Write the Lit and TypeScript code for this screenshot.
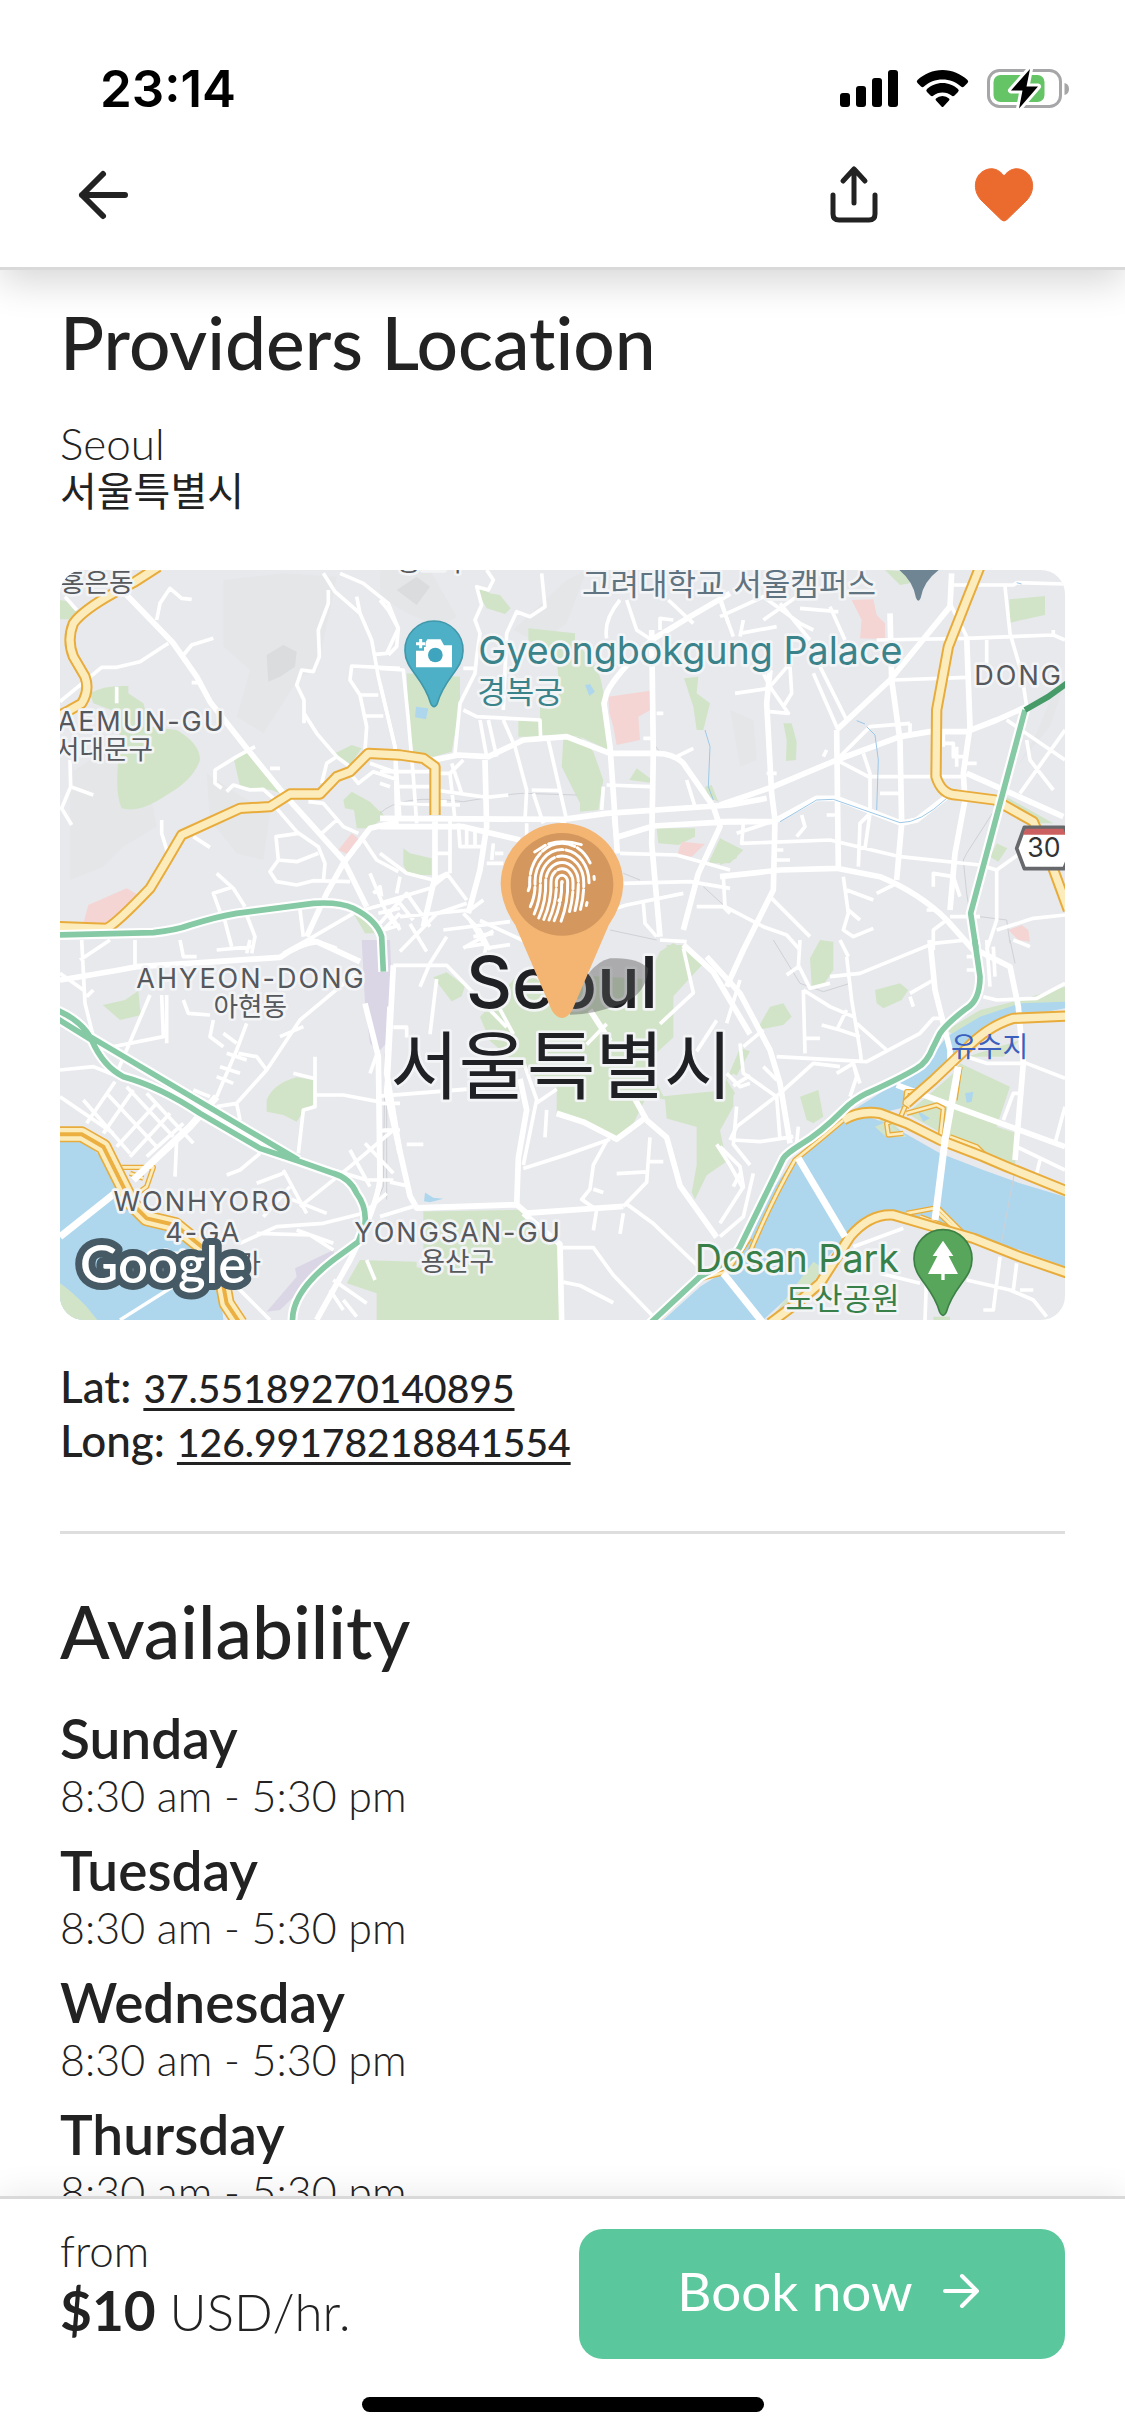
import { LitElement, html, svg, css } from "lit";
import { customElement, property, state } from "lit/decorators.js";

/* The map is drawn in six tiles; every tile has its own origin on the map canvas. */
type Tile = "nw" | "n" | "ne" | "sw" | "s" | "se";
const ORIGIN: Record<Tile, string> = {
  nw: "translate(-30 -30)",
  n: "translate(960 -30)",
  ne: "translate(1980 -30)",
  sw: "translate(-30 1110)",
  s: "translate(960 690) scale(1 1.033)",
  se: "translate(1980 1110)",
};
type Layer = Partial<Record<Tile, string>>;

const hills: Layer = {
  nw: "M520 60L700 40 860 50 830 200 800 330 750 350 640 520 560 470 600 330 520 260ZM60 640L180 560 300 700 320 800 220 860 160 920 60 960ZM470 640L560 700 660 760 640 900 560 880 480 780Z",
  n: "M0 30H150L230 170 180 200 80 160 0 110ZM400 210L560 60 620 30 560 190 480 250Z",
  ne: "M30 450L100 480 110 600 60 620ZM940 540L1000 400 1030 380 990 500 890 620Z",
};
const hillShade: Layer = {
  nw: "M650 285L700 255 740 275 735 320 690 350 655 365Z",
  n: "M50 90L110 50 150 80 110 135Z",
};

const parks: Layer = {
  nw: "M30 120L60 125 80 155 60 178 30 178ZM120 400Q160 375 235 378V400L280 430 300 500 380 510Q450 550 450 600 430 660 350 705 270 760 215 745 195 700 205 600L210 460 130 430ZM552 600L585 570 700 705 665 690Q600 685 570 678ZM855 580L905 555 935 565 900 615 855 595ZM880 720L905 695 960 725 1005 770 960 805H920L912 750 885 745ZM910 1060L950 1080 975 1120 945 1120Z",
  n: "M80 340L240 350V430L215 575 160 590 100 580 85 470ZM285 85L300 80 330 100 360 105 392 145 375 162 320 145ZM445 205L585 220V250Q650 300 665 370L680 450 685 570 600 530 480 525V440L540 400 530 300 445 240ZM550 535L600 530 640 575 670 660 655 750 600 755V730L545 620ZM415 478H480V530H415ZM70 865L90 880 155 895V945H85L70 915ZM912 355L955 350 950 400 990 430 970 510H950L940 440ZM975 680L995 675 1015 725 985 710ZM830 805H945V830L895 855 835 850ZM985 910L1020 835 1090 870 1050 910ZM748 660L770 625 810 655V668ZM0 750L15 770 0 785ZM860 1155H910V1180H860Z",
  ne: "M495 30L565 35 570 70 540 75ZM868 118L975 108V165L870 188ZM190 490H215L230 545 228 600 198 603 200 540ZM0 835L50 865V895L0 915ZM810 890L830 850 862 865 835 905ZM840 700L1000 790H940L850 740Z",
  sw: "M158 195L225 180 265 152 270 205 275 225 210 240ZM650 480Q670 430 740 412L790 420 795 490 760 515 740 545 700 525 650 515ZM890 1030L930 960 1100 965V1140H980V1060Z",
  s: "M160 515L200 500 255 540 245 570 215 585ZM300 630L420 500 800 520 840 440 880 415 975 470 880 570V690L800 760 850 860 1060 840V890L1020 960 1040 1050 980 1090 945 1160 935 1140 950 1060V950L860 925 855 870 800 860 760 940 715 980 680 970 530 910V830L440 790 330 700ZM1050 790L1080 720 1110 730 1070 800ZM130 1195L430 1190 530 1280 540 1510H0V1340L130 1360Z",
  se: "M780 210L900 180 1035 140V190H900L700 285 680 270ZM740 350L900 300 850 350ZM720 370L870 440 830 560 890 580 885 690 780 650 700 600 560 520 620 470 700 400ZM465 550L500 530 560 590H500ZM270 55L300 0 340 5V90L310 135 275 140ZM465 150L540 130 565 150 545 180 490 205 470 190ZM110 270L150 200 190 190 215 230 190 255 140 265ZM0 460L60 330 70 370 20 420 45 460 0 520ZM240 470L295 450 310 530 280 550 260 540ZM0 640L20 665 0 668ZM640 1130H690V1145H640Z",
};
const hospitals: Layer = {
  nw: "M100 1090L115 1035 230 985 265 1005 170 1095ZM865 870L905 820 930 840 892 882Z",
  n: "M685 410L810 392 812 450 775 470 780 540 710 555 700 500 688 460ZM890 890L905 845 975 852 935 890Z",
  ne: "M395 120L460 118 470 165 495 190V238L420 235 425 180ZM865 1110L905 1095 925 1110 930 1145 895 1140Z",
};
const stations: Layer = {
  sw: "M935 0H1020L1028 200 1010 310 985 335 960 310 945 190ZM735 985L850 930 855 950 690 1110 650 1115 740 1010Z",
};
const water: Layer = {
  n: "M108 440L145 445 138 478 105 472ZM615 375L630 372 645 395 628 408Z",
  sw: "M30 600H90Q150 630 180 700L240 800 350 860 440 920 510 1030 520 1140H30Z",
  s: "M135 1140L160 1155 190 1158 150 1168 132 1165Z",
  se: "M400 530Q440 520 520 560L660 640 790 690 900 730 1035 770V980L900 930 700 880 640 850 480 820Q410 850 370 900L270 1010 130 1140H-170L-60 1040 20 990 80 920 150 760 220 660 370 540ZM400 510L510 440 620 370 680 290 780 230 900 190 1035 185V205L880 235Q800 260 740 320L560 500 480 520ZM735 460L760 455 755 485 740 488ZM590 510L630 535 610 545Z",
};
const banks: Layer = {
  sw: "M30 1030Q60 1050 110 1100L150 1150H30Z",
  se: "M150 1140L280 965 310 985 220 1110ZM465 560L500 545 560 590 500 592Z",
};

const avenues: Layer = {
  nw: "M225 100L370 250 440 350 480 425 590 565 700 700 880 900 950 1040M1045 785L960 805 880 910 830 1000 770 1130",
  n: "M0 775L550 778 680 760 1050 735 1160 715M0 800H250L420 840M815 210L820 580 815 850 840 1130M1050 100L930 170 815 240Q700 350 680 400L672 430 690 560 700 700 712 880M160 600L235 585 325 590 430 540 560 530 690 580H830Q880 580 910 610L1000 740 1020 800 955 940 910 1110M715 830L820 798 1050 785H1100M315 600L320 800 300 930 265 1060M165 770V950L130 1100M550 778V800",
  ne: "M0 735L160 680 350 600 540 530 630 515H740L830 480 920 440M0 785H160L290 715H350L545 790 590 780 680 710M350 510L510 360 690 140 695 40M350 510L355 920M150 330L140 430 155 700 165 780 160 990 70 1170 20 1280M740 230L750 500 730 640 735 720 705 880 690 1050M0 950L180 930 350 925 480 950Q600 1000 680 1080L760 1170M740 640L830 680 1030 770M510 160L515 360 540 540 545 790 530 960",
  sw: "M945 190L985 350 990 720Q980 800 900 960L800 1140M1020 200L1010 400 1050 640M30 120Q180 95 260 80L420 70 690 52Q750 10 800 5L930 65",
  s: "M40 480L20 850 90 1150 110 1185 410 1175 440 1200 730 1180M410 1180L415 1040 440 900 420 810M800 930L860 980 900 1120 1010 1270M630 610L690 700M760 860L800 930M910 420L1000 500 1110 680M530 910L610 935 710 985 800 920M430 1200L540 1290 545 1510",
  se: "M-40 50L60 160 150 330 180 430 210 610M530 435L760 520 1035 620M630 0L645 150 690 330V380M770 30L870 80 895 200 910 370 885 660",
};
const streets: Layer = {
  nw: "M320 180L330 130 360 85 395 115 425 118M400 285L425 255 490 235M355 250L270 305 200 322H155L30 425M820 40L855 95 930 160 965 240 985 350 1035 560 1040 790M870 40L940 70 1015 130 1045 205 1010 280 975 283M835 90V130L805 210 808 290 790 335 755 330 740 375 762 420V490M762 460L800 520 860 590 900 620M1050 325L905 318 900 360 930 405 950 500 945 570M930 405H985M940 468H1000M920 110L930 160M425 368H445M615 560L560 590 495 630V670L515 685M530 695L550 675 600 690 640 688 670 715M860 590L830 610 815 670M660 625H690M60 600L62 680 35 745 65 795M62 680L130 705M335 780V820L355 885M430 830L480 862M680 745L740 815 805 860 825 910 820 965M745 820L678 830 685 900 660 935 680 965 740 975 790 962 900 965M685 900L740 905 805 880M775 725L820 730 880 800 925 820M860 780L815 820M940 840L980 900 1045 935M500 940L550 985 585 1040M550 980L490 1000 510 1055M520 1065L545 1160M590 1065L615 1130 605 1180M900 640L925 670 970 635 1045 660M960 610L1045 640M940 1050L1050 1020M970 1000L990 980 995 1010M910 1060L790 1130 700 1180M985 1060L1050 1045M1000 1110L1050 1095M750 1050L760 1130M200 380V430M45 110L80 150M700 1180L790 1140 860 1165M960 940L1010 1060 1040 1100",
  n: "M0 120L25 150 55 205 50 260 25 285M0 325L70 330 85 480 100 650 110 790M0 370L45 560 60 780M250 325H290M290 290L285 340 240 430 225 580M290 290L300 220 285 180 305 135 290 80 325 90 340 60 320 30M485 40L495 140 450 170 410 155 380 220 370 450M720 120Q670 180 680 235M740 120L770 210 815 240M865 120L940 190M880 180L840 175V210M1020 110L1045 190M250 450L290 470 480 480 482 540M300 480L320 590M370 480L405 560 440 690 435 780M325 480L350 590M505 540L560 780M455 690L545 692M460 700L490 790M0 635H160M45 680H155M50 730L240 735M170 640H210L250 600M210 640L225 780M165 690L320 712 385 705M0 670L30 680M215 610L245 700M165 725H200M680 675L810 680M670 680L665 750M700 770L712 880M790 535H815M830 460H850M940 565L890 590M920 660L945 740M720 880L890 885 1050 930M730 970L930 965 1050 985M910 1000L740 1035 590 1080M790 1030L795 1090 830 1130M950 1040H1030L1050 1060M840 1140L920 1145M0 880L80 940 160 960 200 940 260 1020M0 1030L150 985 200 945M210 780V940M160 880H210M235 790L240 860H310M260 800V860M285 810V860M0 1090L80 1000 150 1100M60 1070L270 1050 310 1020M190 1110L390 1085M250 1060L300 1110 330 1170M60 950L50 1000M320 910H370M30 1060L60 1110M60 1030L100 1080M0 1120L60 1060M340 850L335 900M345 880H370M440 790V830M280 1130L340 1120M200 1130L150 1210 120 1280M260 1160L320 1150 310 1200",
  ne: "M470 240L740 235 1000 225 1035 240M700 75H880L890 68 1035 72M855 80L870 220 905 340 920 440M690 130L740 230M800 240V310M520 360L740 352M280 340L350 500M300 320L380 480M0 170L130 110 240 190 280 210M130 180L230 110M0 120L40 230M240 145L355 155M330 140L375 240M70 180L60 230M60 220L170 200M180 130L270 240M210 310L150 380 205 460 150 455M150 385L45 400M210 320L215 400 190 440M130 340L150 380M360 590L450 500 570 490M350 600L445 650H730M430 580L450 640V760L420 790 415 920M480 700H540M450 760L435 865M70 790L65 850 330 840 540 890 780 915 830 930M245 765L255 800 230 830M50 820L170 780M860 480L1035 600M920 540L930 600 1000 690M1035 510L900 700M830 930V1080L800 1170M830 930L900 880M830 1110L940 1075 1035 1065M690 1070H780M640 980V940L700 950 720 1010M370 950L385 1060 370 1110 400 1130 460 1105M380 990L460 1020M385 1050L420 1080M470 1000L520 975M620 1050H645M640 1170V1110L680 1080M10 950L15 1040 130 1100 200 1125 240 1170M150 1010L270 1130M670 550H700V590H740M710 560V620M670 510V560M140 640H170M160 900H210M160 870H190M310 590L320 570M320 765H355M740 610H770M570 490V530M1000 210V230",
  sw: "M95 0L105 190 130 290M30 390L130 380 230 420M140 330L340 290 335 165M300 165L200 400M350 165V310M30 100L100 150M90 60L180 0M130 150L110 170M255 0V80M390 0L400 50H440M600 0L590 40M500 30L610 20M400 180L415 220 480 225M590 250L560 330 500 470M490 240L480 290 520 320M520 280L560 310M530 340L590 360M510 380L570 400M500 410L550 430M930 90L750 240 650 390 560 490 500 500M690 290L760 260M565 340L620 350 650 390M560 490L570 540M795 350V500L760 510 745 640M730 400L790 415M800 465H880L985 485M985 490H1050M195 425L110 550M250 450L160 580M320 490L200 620M360 520L240 650M400 550L290 650M100 480L240 640M170 460L320 620M230 440L370 590M290 460L430 610M30 470L190 580M430 450L480 470M380 600L375 710M630 640L570 690 530 705M700 690L770 820M1030 570L900 680 750 800M900 630L960 740M945 610L1030 700M850 690L950 720 1030 720M570 910L680 860 820 850 940 820 1010 760M620 880L780 885 850 930M740 870L850 910M950 960L975 1020M850 1020L950 1090M880 1080L920 1130M840 1050L880 1110M560 1040L660 1140M830 820L680 760M620 730L700 700M720 740L640 830M1000 570H1050M960 400L985 330",
  s: "M0 860L260 840M430 1070L560 1030 690 985M680 990L640 1060 630 1130 605 1160 650 1190 640 1250M730 1180L800 1110 810 980M735 1170L820 1230 950 1350M540 1300H640L700 1380 820 1500M550 1400L600 1410 700 1460M910 430L940 560 840 650M1110 800L1060 830M1070 890L1060 1000 1110 1060M1010 640L950 730M430 760L470 870 430 1060M470 880L530 840M500 900L495 980M40 480H200L380 660M350 590L400 680M170 520L150 680M0 960H40M80 1000H130M0 1210L100 1180M30 1110L80 1120M710 1085L800 1080M810 1050H850M640 1130L670 1140M60 440L170 330 260 300M90 360L140 440M270 350L320 430 390 420M250 430L340 380M500 440L300 350M620 710L680 650M1010 1000L1050 1060 1090 1130M40 660H80V690M730 1200L720 1260",
  se: "M60 120L20 250M380 50L395 180 420 330 425 370M170 350L440 365 600 280 640 235H670M360 0L385 50M330 110L420 100 640 10 740 0M250 150L330 200 400 230M250 150L255 340M250 295H300M380 210L350 270M305 255L360 270 420 290M240 0L235 80 200 105M235 75L270 145 330 130M410 250L500 330M790 170L830 180 950 175 1035 130M800 0L810 140M820 20L825 110M740 350L800 370H920L1035 415M850 540L880 460H910M890 620L1035 690M1035 500L1005 610M960 660L950 700M60 310L70 400 170 470 180 600M130 270L70 320M30 600L50 560 180 460M40 600L120 605 220 590M0 620L60 680 70 740 0 850M100 700L70 830 0 890M40 740L60 700M180 460L280 370 360 380M350 400L400 370 420 430M400 370L410 410 390 470M130 380L170 420M235 560L230 610M20 400L60 440 90 430M400 920L550 865M840 950L820 1110H790M740 1020L870 1050 940 1080 980 1130M890 970L880 1050M900 1050H940M620 1000L615 1140M480 1000L600 1030M570 170L580 200M570 160L640 120M740 50H770M740 90H770M880 0L930 20",
};
const rails: Layer = {
  n: "M0 760Q60 700 250 725 400 700 430 700L590 705M730 940L780 960M820 550L850 590M690 1110L830 1140M970 980L1030 1035",
  ne: "M830 740L740 880 730 900 740 1000 750 1060M780 1070L860 1080 870 1150",
  sw: "M1005 340L1000 740 950 850",
  s: "M20 860V1160",
  se: "M160 0L240 130 310 155 390 130M885 690L840 930M870 0L885 70",
};
const streams: Layer = {
  n: "M975 510L990 560 985 680 1000 720",
  ne: "M180 785L290 720 340 718 540 788Q600 790 680 715M410 482L435 492M440 500L465 525 475 600 470 750M890 68L905 72",
};
const bridges: Layer = {
  sw: "M30 890L200 755M250 720L420 560 500 470",
  se: "M235 655L375 890M645 840L670 640 675 600 715 380M10 1000L130 1150",
};
const narrowBridges: Layer = { sw: "M210 1140L400 1020" };

const highways: Layer = {
  nw: "M325 20L255 65 190 100Q100 150 70 190 50 240 70 290L105 350Q120 390 95 430L60 450 20 470M20 1100L170 1105Q200 1090 300 985L345 910 395 825 570 745 660 740 720 702H810L860 650 900 635 955 580 1050 585 1120 595 1155 620V765",
  ne: "M780 20L740 120 685 260 650 450 648 650Q665 705 710 705L825 720 940 785 990 900 1045 1050",
  se: "M370 540Q420 510 480 520L560 550 660 600 790 650 860 680 1045 755M560 490L640 420 735 330Q800 260 880 235L1045 228M150 1150L230 1090 300 1030 390 890Q450 820 520 825L640 860 760 895 900 950 1045 1000",
};
const riverside: Layer = {
  sw: "M20 583L95 583 160 620 245 790 290 835 375 855 480 940 515 1010 530 1090 570 1150",
};
const ramps: Layer = {
  sw: "M215 682H310L290 740 262 760M240 700L280 715",
  s: "M820 1520L960 1390 1040 1370 1110 1270",
  se: "M80 960Q150 790 225 660 300 600 370 540M720 380L705 480M600 455H560L555 490 570 500M555 500L540 535 500 550 505 585 550 580M560 520L650 495 670 505 660 600M690 590L770 620 810 660M560 820L640 805 720 880M650 800L740 890M600 830L680 860",
};
const motorways: Layer = {
  nw: "M20 1125L310 1118Q380 1110 420 1095 500 1070 560 1060L790 1030Q870 1025 910 1045 980 1080 995 1130L1000 1235",
  ne: "M915 450L752 1060 768 1165",
  sw: "M20 210Q90 240 120 290L745 660M20 235L125 300Q160 380 220 410 330 440 450 520L630 625 750 665 850 700Q900 715 920 760 950 800 945 850L925 905 850 960Q720 1060 728 1150",
  se: "M764 0L780 110Q780 180 740 205 680 250 660 280L640 320Q620 370 590 385 540 415 440 460 400 480 370 510 300 580 240 615 200 640 190 655L60 920Q40 960 -60 1010L-210 1150",
};
const tunnel: Layer = { ne: "M1040 370L985 410 915 450" };

const draw = (layer: Layer, cls: string) =>
  (Object.keys(layer) as Tile[]).map(
    (t) => svg`<path class=${cls} transform=${ORIGIN[t]} d=${layer[t]}></path>`,
  );

/* Ridges of the fingerprint: nested arches that lean to the left as they run down. */
const ridges = [
  { r: 1, left: 112, right: 52, dash: "54 9 60" },
  { r: 17, left: 110, right: 128, dash: "96 9 190" },
  { r: 33, left: 108, right: 128, dash: "150 9 90 9 60" },
  { r: 49, left: 104, right: 126, dash: "118 9 150 9 80" },
  { r: 65, left: 92, right: 118, dash: "90 9 88 9 140 9 60" },
  { r: 81, left: 70, right: 100, dash: "60 9 150 9 130" },
  { r: 97, left: 22, right: 0, dash: "42 9 70 9 104 9 60" },
];
const ridge = ({ r, left, right, dash }: (typeof ridges)[number]) => svg`
  <path stroke-dasharray=${dash}
    d="M${1506 - r - left * 0.2} ${940 + left}Q${1508 - r} ${940 + left * 0.5} ${1506 - r} 936A${r} ${r * 1.2} 0 0 1 ${1506 + r} 936Q${1508 + r} ${940 + right * 0.5} ${1506 + r - right * 0.2} ${940 + right}"></path>`;

interface MapLabel { text: string; x: number; y: number; cls: string }
const labels: MapLabel[] = [
  { text: "홍은동", x: 110, y: 66, cls: "district hangul" },
  { text: "종로구", x: 1120, y: 2, cls: "district hangul" },
  { text: "AEMUN-GU", x: 245, y: 482, cls: "district" },
  { text: "서대문구", x: 132, y: 568, cls: "district hangul" },
  { text: "AHYEON-DONG", x: 573, y: 1253, cls: "district" },
  { text: "아현동", x: 571, y: 1338, cls: "district hangul" },
  { text: "WONHYORO", x: 430, y: 1922, cls: "district" },
  { text: "4-GA", x: 430, y: 2017, cls: "district" },
  { text: "원효로4가", x: 430, y: 2110, cls: "district hangul" },
  { text: "YONGSAN-GU", x: 1194, y: 2015, cls: "district" },
  { text: "용산구", x: 1192, y: 2102, cls: "district hangul" },
  { text: "DONG", x: 2876, y: 345, cls: "district" },
  { text: "고려대학교 서울캠퍼스", x: 1566, y: 74, cls: "place campus" },
  { text: "Gyeongbokgung Palace", x: 1255, y: 282, cls: "place sight large" },
  { text: "경복궁", x: 1252, y: 398, cls: "place sight" },
  { text: "유수지", x: 2673, y: 1460, cls: "pond" },
  { text: "Dosan Park", x: 2517, y: 2107, cls: "place park-name large end" },
  { text: "도산공원", x: 2519, y: 2220, cls: "place park-name end" },
  { text: "Seoul", x: 1506, y: 1315, cls: "city" },
  { text: "서울특별시", x: 1504, y: 1570, cls: "city city-hangul" },
];

@customElement("location-map")
class LocationMap extends LitElement {
  static styles = css`
    :host { display: block; border-radius: 24px; overflow: hidden; }
    svg { display: block; width: 100%; height: auto; background: #e8e9ed; }
    path { fill: none; stroke-linejoin: round; }
    .hill { fill: #e4e6e8; }
    .shade { fill: #dadcde; }
    .park { fill: #d2e4c8; }
    .hospital { fill: #f4d5d3; }
    .station { fill: #dbd6e6; }
    .water { fill: #aed7ee; }
    .avenue { stroke: #fff; stroke-width: 17; }
    .street { stroke: #fff; stroke-width: 11; }
    .rail { stroke: #cfd1d6; stroke-width: 3; }
    .stream { stroke: #9cc8e8; stroke-width: 3; }
    .bridge { stroke: #fff; stroke-width: 21; }
    .narrow { stroke: #fff; stroke-width: 10; }
    .highway-edge { stroke: #e8ac3c; stroke-width: 34; }
    .highway { stroke: #fdecbb; stroke-width: 22; }
    .riverside-edge { stroke: #e8ac3c; stroke-width: 48; }
    .riverside { stroke: #fdecbb; stroke-width: 38; }
    .riverside-mid { stroke: #ebb041; stroke-width: 12; }
    .ramp-edge { stroke: #e8ac3c; stroke-width: 16; }
    .ramp { stroke: #fdecbb; stroke-width: 8; }
    .motorway-edge { stroke: #fff; stroke-width: 30; }
    .motorway { stroke: #86c9a5; stroke-width: 17; }
    .tunnel { stroke: #479b68; stroke-width: 18; }
    text {
      font-family: Inter, "Noto Sans CJK KR", sans-serif;
      paint-order: stroke;
      stroke: #f3f4f6;
      stroke-width: 16px;
      stroke-linejoin: round;
    }
    .district { font-size: 81px; fill: #55585c; text-anchor: middle; letter-spacing: 6px; }
    .hangul { font-size: 80px; letter-spacing: 0; }
    .place { font-size: 93px; }
    .large { font-size: 113px; }
    .end { text-anchor: end; }
    .campus { fill: #5f7380; }
    .sight { fill: #3a838a; }
    .park-name { fill: #38804a; }
    .pond { font-size: 84px; fill: #3c5fbd; stroke: none; }
    .city { font-size: 214px; font-weight: 500; fill: #202124; text-anchor: middle; }
    .city-hangul { font-size: 223px; font-weight: 400; }
    .google {
      font-family: Lato, sans-serif; font-size: 158px; font-weight: 600;
      fill: #fff; stroke: #455a64; stroke-width: 42px;
    }
    .route { font-size: 80px; fill: #333; stroke: none; text-anchor: middle; }
    .ridge path { stroke: #fff; stroke-width: 9; stroke-linecap: round; }
  `;

  render() {
    return html`
      <svg viewBox="0 0 3015 2250" role="img" aria-label="Map of Seoul">
        ${draw(hills, "hill")} ${draw(hillShade, "shade")} ${draw(parks, "park")}
        ${draw(hospitals, "hospital")} ${draw(stations, "station")} ${draw(water, "water")}
        ${draw(banks, "park")} ${draw(rails, "rail")} ${draw(streets, "street")}
        ${draw(avenues, "avenue")} ${draw(streams, "stream")} ${draw(narrowBridges, "narrow")}
        ${draw(ramps, "ramp-edge")} ${draw(ramps, "ramp")}
        ${draw(highways, "highway-edge")} ${draw(highways, "highway")}
        ${draw(riverside, "riverside-edge")} ${draw(riverside, "riverside")}
        ${draw(riverside, "riverside-mid")} ${draw(bridges, "bridge")}
        ${draw(motorways, "motorway-edge")} ${draw(motorways, "motorway")} ${draw(tunnel, "tunnel")}

        <path style="fill:#6f8593" d="M2518 0H2636Q2590 35 2582 84 2575 100 2568 84 2560 35 2518 0Z"></path>
        ${labels.map((l) => svg`<text class=${l.cls} x=${l.x} y=${l.y}>${l.text}</text>`)}

        <g>
          <path d="M1122 153A87 87 0 0 0 1035 242C1035 300 1090 320 1112 400Q1122 420 1132 400C1154 320 1209 300 1209 242A87 87 0 0 0 1122 153Z" style="fill:#4eb0c6;stroke:#4198ab;stroke-width:5"></path>
          <path d="M1068 242H1092V226L1102 208H1142L1152 226H1176V292H1068Z" style="fill:#fff"></path>
          <circle cx="1126" cy="255" r="22" fill="#3fa5be"></circle>
          <path d="M1082 206V236M1067 221H1097" style="stroke:#4eb0c6;stroke-width:20"></path>
          <path d="M1082 207V235M1068 221H1096" style="stroke:#fff;stroke-width:9"></path>
        </g>
        <g>
          <path d="M2649 1979A87 87 0 0 0 2562 2068C2562 2126 2617 2146 2639 2226Q2649 2246 2659 2226C2681 2146 2736 2126 2736 2068A87 87 0 0 0 2649 1979Z" style="fill:#57a65b;stroke:#3d8046;stroke-width:5"></path>
          <path d="M2649 2012L2680 2058H2666L2694 2112H2654V2130H2644V2112H2604L2632 2058H2618Z" style="fill:#fff"></path>
        </g>
        <g>
          <path d="M2870 835L2893 772H3012L3037 835 3012 896H2893Z" style="fill:#fff;stroke:#66686b;stroke-width:11"></path>
          <path d="M2889 794L2896 776H3010L3017 794Z" style="fill:#cc5f5f"></path>
          <text class="route" x="2952" y="862">30</text>
        </g>

        <path d="M1530 1320Q1580 1180 1650 1165 1730 1160 1765 1195 1760 1270 1690 1300 1600 1335 1530 1334Z" style="fill:#555;fill-opacity:.42"></path>
        <path d="M1322 943A184 184 0 1 1 1690 943Q1688 1005 1646 1066L1536 1322Q1506 1366 1476 1322L1366 1066Q1324 1005 1322 943Z" style="fill:#f3b571"></path>
        <circle cx="1506" cy="943" r="154" fill="#d4975d"></circle>
        <g class="ridge">
          ${ridges.map(ridge)}
          <path d="M1424 846L1456 826M1466 822Q1510 808 1564 824"></path>
        </g>
        <text class="google" x="60" y="2140">Google</text>
      </svg>
    `;
  }
}

@customElement("status-bar")
class StatusBar extends LitElement {
  @property() time = "";
  static styles = css`
    :host {
      display: flex; justify-content: space-between; align-items: center;
      height: 42px; padding: 0 55px 0 100px;
      font: 600 51px/42px Inter, sans-serif; color: #000;
    }
    svg { display: block; }
  `;
  render() {
    return html`
      <span>${this.time}</span>
      <svg width="230" height="42" viewBox="840 68 230 42" role="img" aria-label="Signal, Wi-Fi, battery charging">
        <rect x="840" y="93" width="10" height="14" rx="3"></rect>
        <rect x="856" y="86" width="10" height="21" rx="3"></rect>
        <rect x="872" y="78" width="10" height="29" rx="3"></rect>
        <rect x="888" y="70" width="10" height="37" rx="3"></rect>
        <path d="M942.500 70C952 70 961 74 967.500 80Q969 81.500 967.500 83L964 86.500Q962.500 88 961 86.500C956 82 949.500 79.500 942.500 79.500S929 82 924 86.500Q922.500 88 921 86.500L917.500 83Q916 81.500 917.500 80C924 74 933 70 942.500 70Z"></path>
        <path d="M942.500 83C948.500 83 954 85.500 958 89Q959.500 90.500 958 92L954.500 95.500Q953 97 951.500 95.500C949 93.500 946 92.500 942.500 92.500S936 93.500 933.500 95.500Q932 97 930.500 95.500L927 92Q925.500 90.500 927 89C931 85.500 936.500 83 942.500 83Z"></path>
        <path d="M942.500 96Q946.500 96 949 98.500 950 99.500 949 100.500L943.500 106.500Q942.500 107.500 941.500 106.500L936 100.500Q935 99.500 936 98.500 938.500 96 942.500 96Z"></path>
        <rect x="988.500" y="70.500" width="72" height="36" rx="11" fill="none" stroke="#a6a6a8" stroke-width="3"></rect>
        <path d="M1064.500 83Q1069 84 1069 89T1064.500 95Z" fill="#a6a6a8"></path>
        <rect x="993.500" y="75" width="51" height="27" rx="7" fill="#65c466"></rect>
        <path d="M1030 69L1011 90.500H1022.500L1019 108.500 1038 86.500H1026.500Z" stroke="#fff" stroke-width="6" stroke-linejoin="round"></path>
        <path d="M1030 69L1011 90.500H1022.500L1019 108.500 1038 86.500H1026.500Z"></path>
      </svg>
    `;
  }
}

interface Slot { day: string; hours: string }

@customElement("app-root")
class AppRoot extends LitElement {
  @state() private saved = true;

  private readonly slots: Slot[] = ["Sunday", "Tuesday", "Wednesday", "Thursday"].map((day) => ({
    day,
    hours: "8:30 am - 5:30 pm",
  }));

  static styles = css`
    :host {
      display: flex; flex-direction: column; height: 100vh; overflow: hidden;
      background: #fff; color: #222;
      font-family: Lato, "Noto Sans CJK KR", sans-serif;
      font-variant-ligatures: none;
    }
    header, footer { position: relative; z-index: 1; flex: none; background: #fff; }
    header {
      padding-top: 68px; border-bottom: 3px solid #d9d9d9;
      box-shadow: 0 12px 36px rgba(0, 0, 0, 0.16);
    }
    nav { display: flex; align-items: center; gap: 60px; padding: 37px 76px 24px 58px; }
    nav .back { margin-right: auto; }
    .icon { display: grid; place-items: center; width: 96px; height: 96px; margin: 0 -3px; padding: 0; border: 0; background: none; color: #222; }
    svg { display: block; }
    main { flex: 1; min-height: 0; overflow: hidden; padding: 30px 60px 0; }
    h2 { margin: 0; font-size: 73px; line-height: 84px; font-weight: 500; }
    address { margin-top: 35px; font-style: normal; font-weight: 300; font-size: 44px; line-height: 48px; }
    address span { display: block; }
    address .local { font-size: 40px; font-weight: 400; }
    location-map { margin-top: 55px; }
    .coords { margin: 40px 0 0; font-size: 44px; line-height: 52px; font-weight: 500; }
    .coords div { display: flex; align-items: baseline; gap: 12px; }
    .coords dt, .coords dd { margin: 0; }
    .coords a { color: inherit; font-size: 39px; text-decoration: underline; text-decoration-thickness: 3px; text-underline-offset: 5px; }
    hr { margin: 63px 0 55px; border: 0; border-top: 3px solid #dedede; }
    .week { margin: 33px 0 0; padding: 0; list-style: none; }
    .week li { height: 132px; }
    h3 { margin: 0; font-size: 55px; line-height: 64px; font-weight: 600; }
    .week p { margin: 0; font-size: 43px; line-height: 52px; font-weight: 300; }
    footer { border-top: 3px solid #d9d9d9; box-shadow: 0 -4px 30px rgba(0, 0, 0, 0.08); padding: 30px 60px 24px; }
    .bar { display: flex; justify-content: space-between; align-items: flex-start; }
    .price { margin: 0; font-weight: 300; font-size: 44px; line-height: 42px; }
    .price span { display: block; font-size: 51px; line-height: 78px; }
    .price strong { font-size: 55px; font-weight: 700; }
    .book {
      display: flex; justify-content: center; align-items: center; gap: 30px;
      width: 486px; height: 130px; padding: 0 0 6px 12px; border: 0; border-radius: 24px;
      background: #5ac79c; color: #fff; font: 400 53px/64px Lato, sans-serif;
    }
    .home { width: 402px; height: 15px; margin: 38px auto 0; border-radius: 8px; background: #000; }
  `;

  render() {
    return html`
      <header>
        <status-bar time="23:14"></status-bar>
        <nav>
          <button class="icon back" aria-label="Back">
            <svg width="52" height="52" viewBox="0 0 52 52" fill="none" stroke="currentColor" stroke-width="6" stroke-linecap="round" stroke-linejoin="round">
              <path d="M26 5L5 26 26 47M5 26H48"></path>
            </svg>
          </button>
          <button class="icon" aria-label="Share">
            <svg width="50" height="60" viewBox="0 0 50 60" fill="none" stroke="currentColor" stroke-width="5" stroke-linecap="round" stroke-linejoin="round">
              <path d="M4 30V49Q4 55 10 55H40Q46 55 46 49V30M25 38V5M14 16L25 4 36 16"></path>
            </svg>
          </button>
          <button class="icon" aria-label="Favourite" aria-pressed=${this.saved} @click=${() => (this.saved = !this.saved)}>
            <svg width="60" height="54" viewBox="0 0 60 54" fill=${this.saved ? "#eb6a2e" : "none"} stroke="#eb6a2e">
              <path d="M27 51.500L7 32C-2 22 .500 8 9.500 3 17-1.500 25 1 30 8 35 1 43-1.500 50.500 3 59.500 8 62 22 53 32L33 51.500Q30 54.500 27 51.500Z"></path>
            </svg>
          </button>
        </nav>
      </header>
      <main>
        <section>
          <h2>Providers Location</h2>
          <address><span>Seoul</span><span class="local">서울특별시</span></address>
          <location-map></location-map>
          <dl class="coords">
            <div><dt>Lat:</dt><dd><a href="geo:37.55189270140895,126.99178218841554">37.55189270140895</a></dd></div>
            <div><dt>Long:</dt><dd><a href="geo:37.55189270140895,126.99178218841554">126.99178218841554</a></dd></div>
          </dl>
        </section>
        <hr />
        <section>
          <h2>Availability</h2>
          <ul class="week">
            ${this.slots.map((s) => html`<li><h3>${s.day}</h3><p>${s.hours}</p></li>`)}
          </ul>
        </section>
      </main>
      <footer>
        <div class="bar">
          <p class="price">from <span><strong>$10</strong> USD/hr.</span></p>
          <button class="book">
            Book now
            <svg width="36" height="36" viewBox="0 0 36 36" fill="none" stroke="currentColor" stroke-width="4" stroke-linecap="round" stroke-linejoin="round">
              <path d="M2 18H33M19 3L34 18 19 33"></path>
            </svg>
          </button>
        </div>
        <div class="home"></div>
      </footer>
    `;
  }
}
